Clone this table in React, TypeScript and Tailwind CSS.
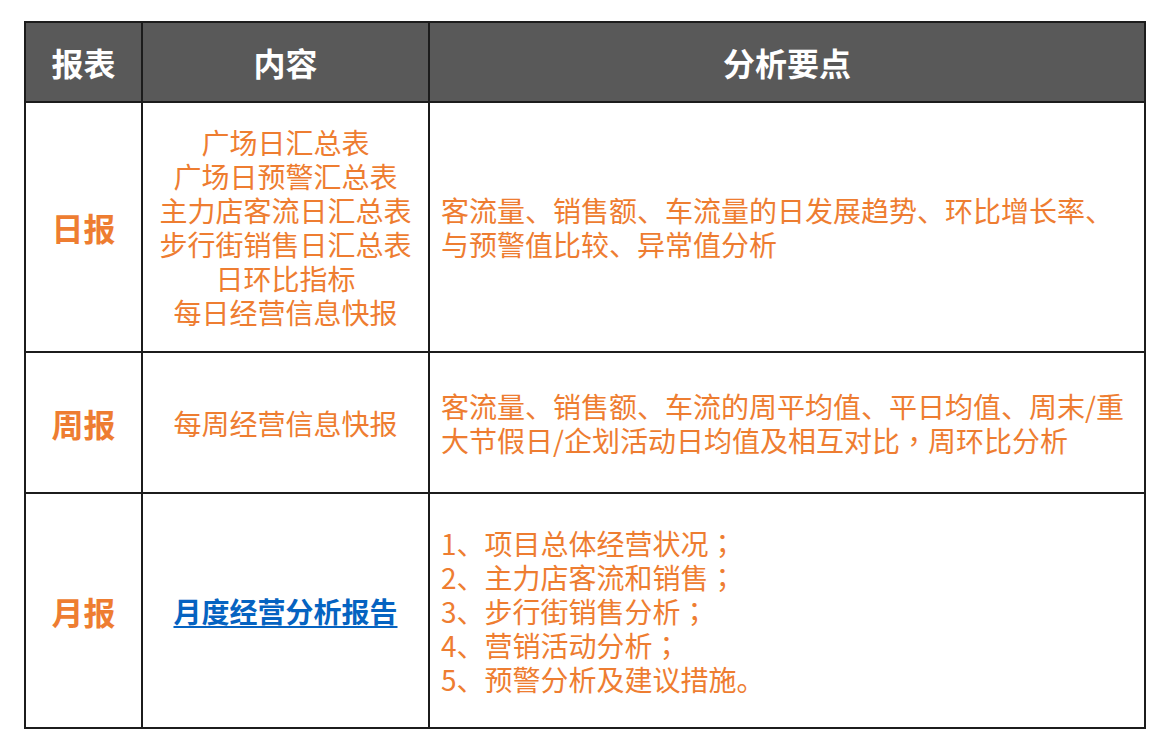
const font = { fontFamily: '"Noto Sans CJK SC", "Noto Sans", sans-serif' };

const cell = 'border-2 border-[#1c1c1c] align-middle';

// centred full-width punctuation, as in the reference
function P({ c }: { c: string }) {
  return <span style={{ fontFamily: '"Noto Sans CJK TC", sans-serif' }}>{c}</span>;
}

export default function App() {
  return (
    <div className="min-h-[750px] w-[1173px] bg-white pt-[21px] pl-[24px]" style={font}>
      <table className="w-[1120px] table-fixed border-collapse">
        <colgroup>
          <col className="w-[117px]" />
          <col className="w-[287px]" />
          <col className="w-[716px]" />
        </colgroup>
        <thead>
          <tr className="h-[80px] bg-[#595959] text-[32px] font-bold text-white">
            <th className={cell}>报表</th>
            <th className={cell}>内容</th>
            <th className={cell}>分析要点</th>
          </tr>
        </thead>
        <tbody className="text-[#ee7d31]">
          <tr className="h-[250px]">
            <td className={`${cell} text-center text-[32px] font-bold`}>日报</td>
            <td className={`${cell} text-center text-[28px] leading-[34px] whitespace-nowrap`}>
              广场日汇总表
              <br />
              广场日预警汇总表
              <br />
              主力店客流日汇总表
              <br />
              步行街销售日汇总表
              <br />
              日环比指标
              <br />
              每日经营信息快报
            </td>
            <td className={`${cell} px-[11px] text-[28px] leading-[34px] whitespace-nowrap`}>
              客流量、销售额、车流量的日发展趋势、环比增长率、
              <br />
              与预警值比较、异常值分析
            </td>
          </tr>
          <tr className="h-[141px]">
            <td className={`${cell} text-center text-[32px] font-bold`}>周报</td>
            <td className={`${cell} text-center text-[28px] leading-[34px]`}>每周经营信息快报</td>
            <td className={`${cell} px-[11px] text-[28px] leading-[34px] whitespace-nowrap`}>
              客流量、销售额、车流的周平均值、平日均值、周末/重
              <br />
              大节假日/企划活动日均值及相互对比<P c="，" />周环比分析
            </td>
          </tr>
          <tr className="h-[235px]">
            <td className={`${cell} text-center text-[32px] font-bold`}>月报</td>
            <td className={`${cell} text-center`}>
              <a
                href="#"
                className="text-[28px] font-bold leading-[34px] text-[#0563c1] underline decoration-2 underline-offset-[3px]"
              >
                月度经营分析报告
              </a>
            </td>
            <td className={`${cell} px-[11px] text-[28px] leading-[34px] whitespace-nowrap`}>
              1、项目总体经营状况<P c="；" />
              <br />
              2、主力店客流和销售<P c="；" />
              <br />
              3、步行街销售分析<P c="；" />
              <br />
              4、营销活动分析<P c="；" />
              <br />
              5、预警分析及建议措施。
            </td>
          </tr>
        </tbody>
      </table>
    </div>
  );
}
